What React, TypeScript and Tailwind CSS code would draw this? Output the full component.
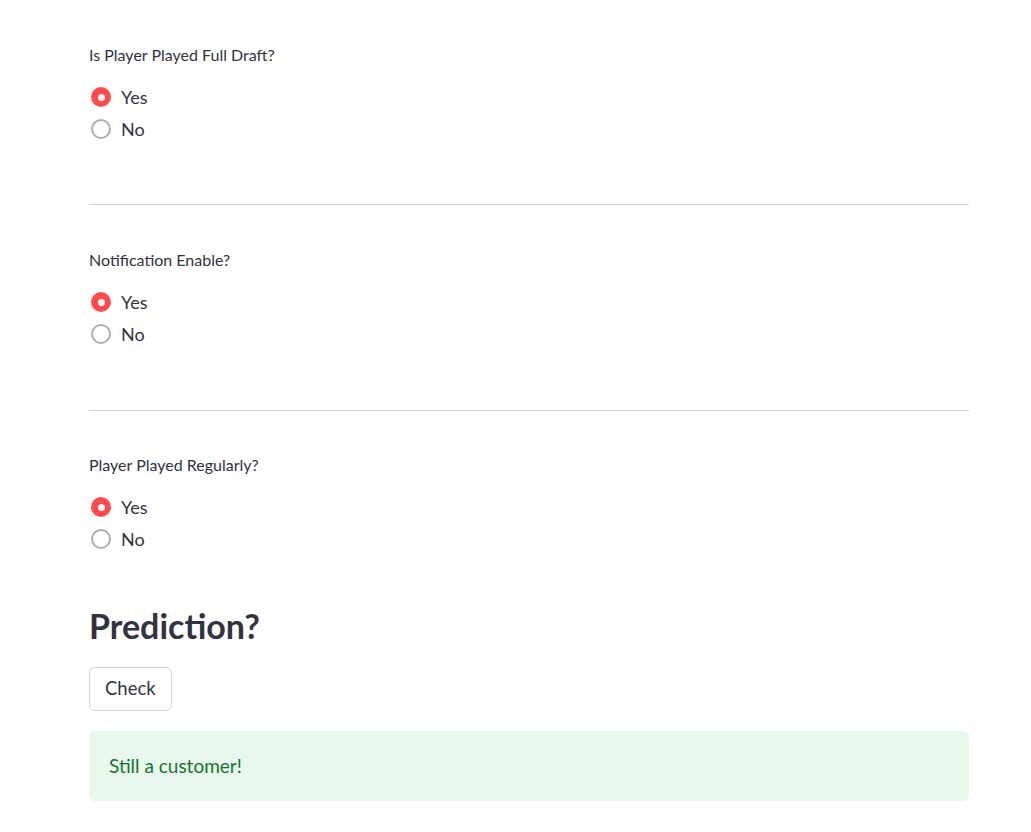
import { useState } from "react";

type Option = "Yes" | "No";

function RadioGroup({ label, top }: { label: string; top: string }) {
    const [value, setValue] = useState<Option>("Yes");
    return (
        <section className={top}>
            <div className="h-[22px] text-[16px] leading-[22px] text-[#31333f]">{label}</div>
            <div className="mt-[19px] flex flex-col gap-2">
                {(["Yes", "No"] as Option[]).map((opt) => (
                    <label key={opt} className="flex h-6 cursor-pointer items-center" onClick={() => setValue(opt)}>
                        <span className="ml-[2px] flex h-[20px] w-[20px] items-center justify-center">
                            {value === opt ? (
                                <span className="flex h-[20px] w-[20px] items-center justify-center rounded-full bg-[#ff4b4b]">
                                    <span className="h-[7px] w-[7px] rounded-full bg-[#f3f4f7]" />
                                </span>
                            ) : (
                                <span className="h-[20px] w-[20px] rounded-full border-2 border-[#aeaeae] bg-white" />
                            )}
                        </span>
                        <span className="ml-[10px] text-[18px] leading-6 text-[#31333f]">{opt}</span>
                    </label>
                ))}
            </div>
        </section>
    );
}

export default function App() {
    return (
        <main className="min-h-screen bg-white font-['Lato','Liberation_Sans',sans-serif]">
            <div className="ml-[89px] w-[880px] pt-[44px]">
                <RadioGroup label="Is Player Played Full Draft?" top="" />
                <hr className="mt-[63px] border-0 border-t border-[#d6d6d9]" />
                <RadioGroup label="Notification Enable?" top="mt-[44px]" />
                <hr className="mt-[64px] border-0 border-t border-[#d6d6d9]" />
                <RadioGroup label="Player Played Regularly?" top="mt-[43px]" />

                <h2 className="mt-[53px] h-[44px] text-[34px] font-bold leading-[44px] text-[#31333f]">Prediction?</h2>

                <button className="mt-[19px] h-[44px] rounded-[6px] border border-[#d5d6d9] bg-white px-[15px] text-[18.5px] text-[#31333f]">
                    Check
                </button>

                <div className="mt-[20px] flex h-[70px] items-center rounded-[6px] bg-[#e8f8ec] px-[20px] pt-[1px] text-[19px] text-[#177233]">
                    Still a customer!
                </div>
            </div>
        </main>
    );
}
